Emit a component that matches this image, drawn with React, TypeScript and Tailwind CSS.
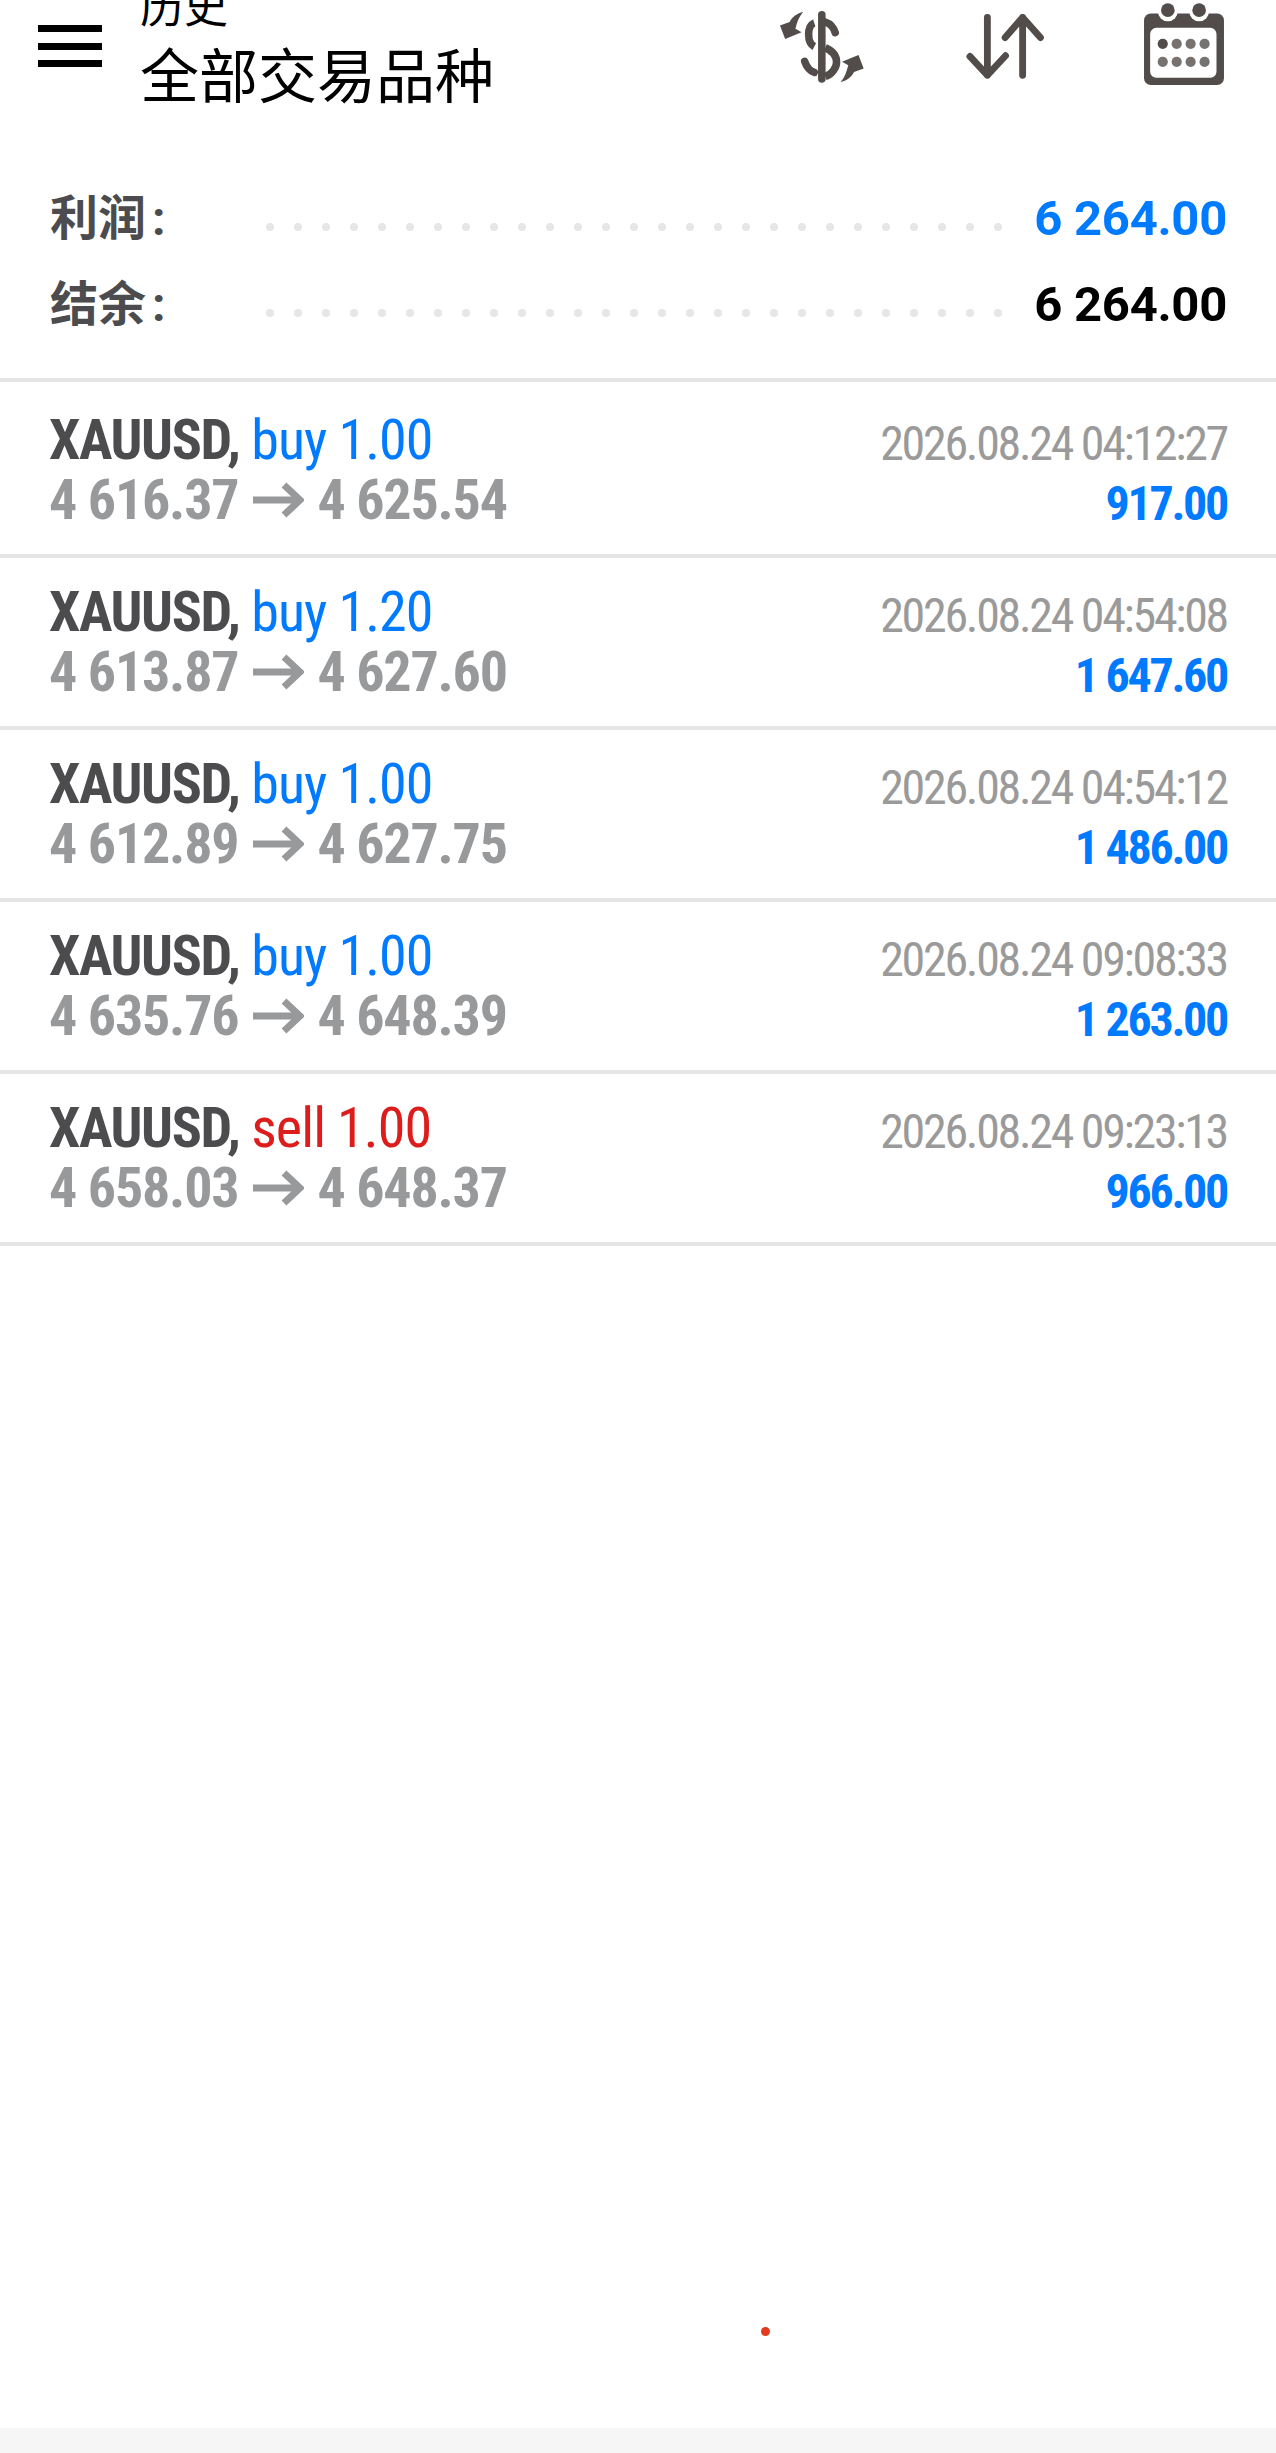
const cjk = "font-['Roboto','Noto_Sans_CJK_SC',sans-serif]";
const cond = "font-['Roboto_Condensed','Roboto',sans-serif]";

const rows = [
  { side: "buy", vol: "1.00", from: "4 616.37", to: "4 625.54", time: "2026.08.24 04:12:27", profit: "917.00" },
  { side: "buy", vol: "1.20", from: "4 613.87", to: "4 627.60", time: "2026.08.24 04:54:08", profit: "1 647.60" },
  { side: "buy", vol: "1.00", from: "4 612.89", to: "4 627.75", time: "2026.08.24 04:54:12", profit: "1 486.00" },
  { side: "buy", vol: "1.00", from: "4 635.76", to: "4 648.39", time: "2026.08.24 09:08:33", profit: "1 263.00" },
  { side: "sell", vol: "1.00", from: "4 658.03", to: "4 648.37", time: "2026.08.24 09:23:13", profit: "966.00" },
];

function DollarIcon() {
  return (
    <svg viewBox="115 33 245 210" className="w-[84px] h-[72px]" fill="none" stroke="#524d4a" strokeWidth="22">
      <path d="M237 44V231" strokeLinecap="round" />
      <path d="M215 68C193 75 193 125 215 137" />
      <path d="M247 65C262 70 272 82 276 96" strokeLinecap="round" />
      <path d="M247 140C270 150 280 165 280 182C280 200 265 218 247 224" />
      <path d="M187 180C192 195 202 208 215 212" strokeLinecap="round" />
      <path d="M183 35C165 40 150 50 143 65L115 75L130 115L178 95L160 85C165 65 170 50 183 35Z" fill="#524d4a" stroke="none" />
      <path d="M291 241C309 236 324 226 331 211L359 201L344 161L296 181L314 191C309 211 304 226 291 241Z" fill="#524d4a" stroke="none" />
    </svg>
  );
}

function ArrowsIcon() {
  return (
    <svg viewBox="655 43 227 190" className="w-[78px] h-[65px]" fill="none" stroke="#524d4a" strokeWidth="20" strokeLinecap="round" strokeLinejoin="round">
      <path d="M717 53V222M666 167L717 222L770 165" />
      <path d="M820 222V53M769 112L820 53L872 112" />
    </svg>
  );
}

function CalendarIcon() {
  const xs = [1235, 1276, 1317, 1358];
  return (
    <svg viewBox="1180 12 235 241" className="w-[80px] h-[82px]">
      <rect x="1180" y="43" width="235" height="210" rx="20" fill="#524d4a" />
      <rect x="1198" y="85" width="195" height="147" rx="18" fill="#fff" />
      <circle cx="1250" cy="37" r="29" fill="#fff" />
      <circle cx="1342" cy="37" r="29" fill="#fff" />
      <circle cx="1250" cy="33" r="20" fill="#524d4a" />
      <circle cx="1342" cy="33" r="20" fill="#524d4a" />
      {[132, 185].map((y) =>
        xs.map((x) => (
          <circle key={`${x}-${y}`} cx={x} cy={y} r="15" fill={x === 1235 && y === 132 ? "#524d4a" : "#757270"} />
        ))
      )}
    </svg>
  );
}

function PriceArrow() {
  return (
    <svg viewBox="0 0 52 36" className="inline-block w-[52px] h-[36px] ml-[14px] mr-[13px]" fill="none" stroke="#97999b" strokeWidth="7">
      <path d="M1 18H47M32 3L48 18L32 33" />
    </svg>
  );
}

function SummaryRow({ label, value, color }: { label: string; value: string; color: string }) {
  return (
    <div className="h-[86px] flex items-center">
      <span className={`w-[216px] shrink-0 text-[48px] font-bold text-[#4c4c4f] ${cjk}`}>
        {label}
        <span className="ml-[6px]">:</span>
      </span>
      <div className="w-[736px] shrink-0 flex justify-between mt-4">
        {Array.from({ length: 27 }).map((_, i) => (
          <span key={i} className="w-2 h-2 rounded-full bg-[#e6e6e6]" />
        ))}
      </div>
      <span className={`ml-auto text-[49px] font-bold tracking-[-0.3px] font-['Roboto',sans-serif] whitespace-nowrap ${color}`}>{value}</span>
    </div>
  );
}

export default function App() {
  return (
    <div className="w-[1276px] h-[2453px] overflow-hidden bg-white flex flex-col relative">
      <header className="h-[176px] shrink-0 flex items-start overflow-hidden">
        <div className="w-[64px] ml-[38px] mt-[25px] flex flex-col gap-[10.5px] shrink-0">
          <span className="h-[7px] bg-black" />
          <span className="h-[7px] bg-black" />
          <span className="h-[7px] bg-black" />
        </div>
        <div className={`ml-[38px] -mt-[22px] text-black ${cjk}`}>
          <div className="text-[44px] leading-[60px]">历史</div>
          <div className="text-[59px] leading-[80px] whitespace-nowrap">全部交易品种</div>
        </div>
        <div className="ml-auto mr-[52px] flex items-start">
          <div className="mt-[11px]"><DollarIcon /></div>
          <div className="mt-[14px] ml-[102px]"><ArrowsIcon /></div>
          <div className="mt-[3px] ml-[100px]"><CalendarIcon /></div>
        </div>
      </header>

      <section className="pl-[50px] pr-[49px] h-[202px] shrink-0">
        <SummaryRow label="利润" value="6 264.00" color="text-[#007aff]" />
        <SummaryRow label="结余" value="6 264.00" color="text-black" />
      </section>

      <div className="h-1 bg-[#e5e5e5] shrink-0 mb-1" />

      {rows.map((r, i) => (
        <div key={i} className="h-[172px] shrink-0 border-b-4 border-[#e5e5e5] pl-[49px] pr-[49px] flex justify-between">
          <div className={`pt-[24px] text-[56px] leading-[60px] whitespace-nowrap tracking-[-1.2px] ${cond}`}>
            <div>
              <span className="font-bold text-[#4c4c4f] tracking-[-1.4px]">XAUUSD, </span>
              <span className={`tracking-[-0.9px] ${r.side === "buy" ? "text-[#007aff]" : "text-[#dd1c1c]"}`}>{r.side} {r.vol}</span>
            </div>
            <div className="font-bold text-[#97999b] flex items-center">
              <span>{r.from}</span>
              <PriceArrow />
              <span>{r.to}</span>
            </div>
          </div>
          <div className={`pt-[28px] text-right leading-[60px] whitespace-nowrap tracking-[-2.3px] ${cond}`}>
            <div className="text-[48px] text-[#9a9a9a]">{r.time}</div>
            <div className="text-[48px] font-bold text-[#007aff]">{r.profit}</div>
          </div>
        </div>
      ))}

      <div className="flex-1" />
      <div className="h-[25px] shrink-0 bg-[#f6f6f6]" />
      <span className="absolute left-[761px] top-[2327px] w-[9px] h-[9px] rounded-full bg-[#e63a1e]" />
    </div>
  );
}
